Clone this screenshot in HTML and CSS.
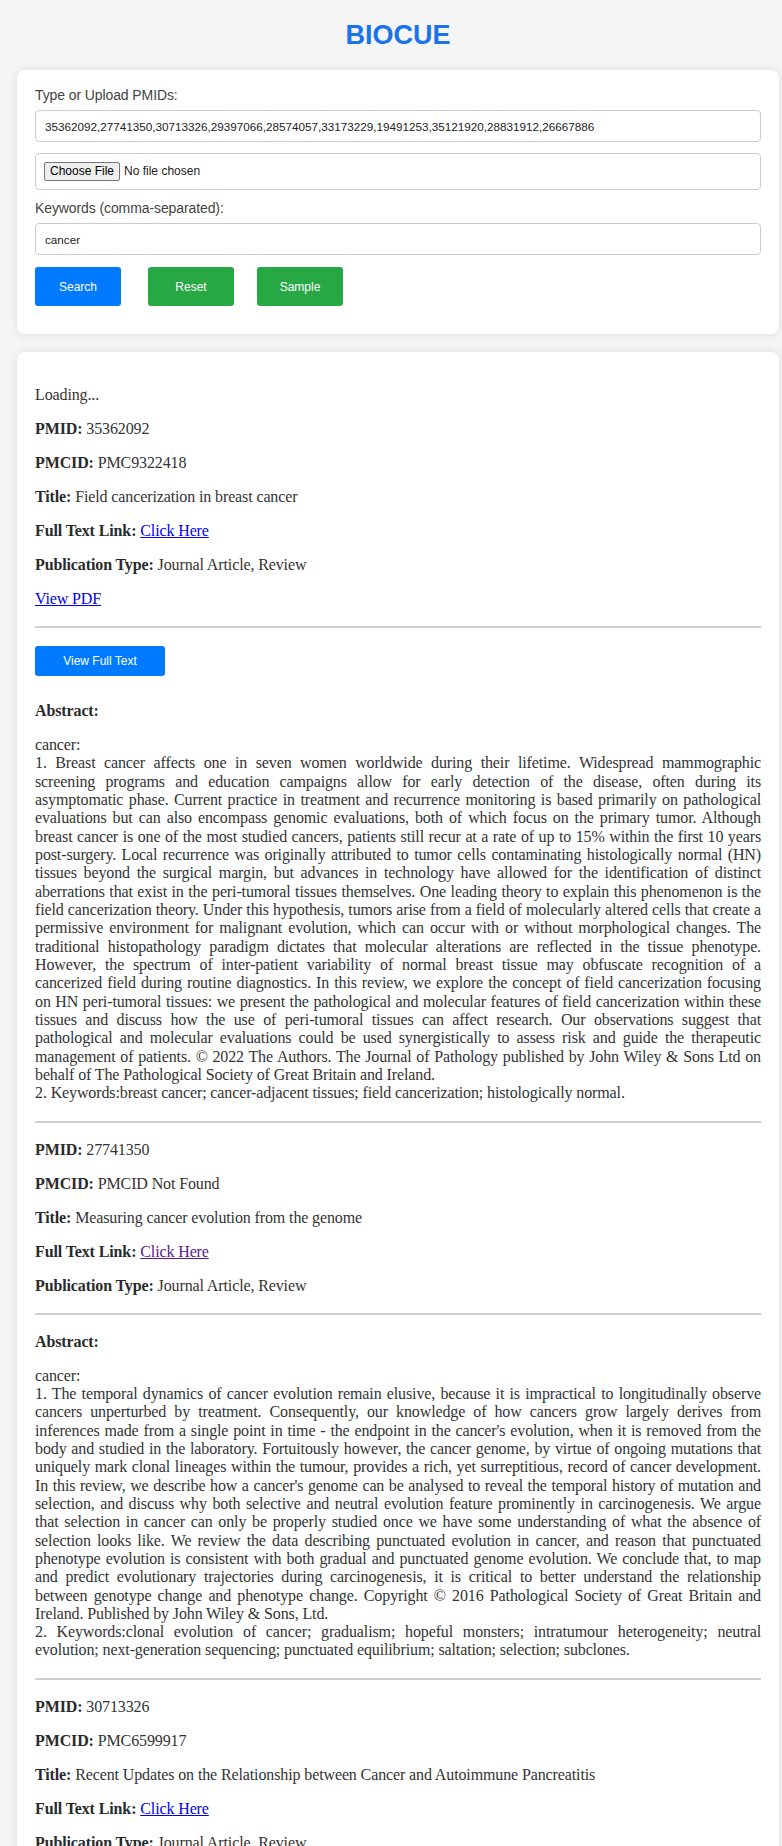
FILE: index.html
```html
<!DOCTYPE html>
<html lang="en">
<head>
<meta charset="utf-8">
<title>BIOCUE</title>
<link rel="stylesheet" href="styles.css">
</head>
<body>
<div class="page">
  <h1 class="brand">BIOCUE</h1>

  <section class="card form-card">
    <label class="field-label" for="pmids">Type or Upload PMIDs:</label>
    <input class="text-input" id="pmids" type="text" value="35362092,27741350,30713326,29397066,28574057,33173229,19491253,35121920,28831912,26667886">
    <input class="file-input" type="file">
    <label class="field-label field-label--spaced" for="keywords">Keywords (comma-separated):</label>
    <input class="text-input" id="keywords" type="text" value="cancer">
    <div class="actions">
      <button class="btn btn-blue" type="button">Search</button>
      <button class="btn btn-green btn-reset" type="button">Reset</button>
      <button class="btn btn-green btn-sample" type="button">Sample</button>
    </div>
  </section>

  <section class="card results-card">
    <p class="line">Loading...</p>

    <article class="result">
      <p class="line"><strong>PMID:</strong> 35362092</p>
      <p class="line"><strong>PMCID:</strong> PMC9322418</p>
      <p class="line"><strong>Title:</strong> Field cancerization in breast cancer</p>
      <p class="line"><strong>Full Text Link:</strong> <a class="link" href="#">Click Here</a></p>
      <p class="line"><strong>Publication Type:</strong> Journal Article, Review</p>
      <p class="line"><a class="link" href="#">View PDF</a></p>
      <hr class="rule">
      <div class="fulltext"><button class="btn btn-blue btn-fulltext" type="button">View Full Text</button></div>
      <p class="line"><strong>Abstract:</strong></p>
      <p class="abstract">cancer:<br>1. Breast cancer affects one in seven women worldwide during their lifetime. Widespread mammographic screening programs and education campaigns allow for early detection of the disease, often during its asymptomatic phase. Current practice in treatment and recurrence monitoring is based primarily on pathological evaluations but can also encompass genomic evaluations, both of which focus on the primary tumor. Although breast cancer is one of the most studied cancers, patients still recur at a rate of up to 15% within the first 10 years post-surgery. Local recurrence was originally attributed to tumor cells contaminating histologically normal (HN) tissues beyond the surgical margin, but advances in technology have allowed for the identification of distinct aberrations that exist in the peri-tumoral tissues themselves. One leading theory to explain this phenomenon is the field cancerization theory. Under this hypothesis, tumors arise from a field of molecularly altered cells that create a permissive environment for malignant evolution, which can occur with or without morphological changes. The traditional histopathology paradigm dictates that molecular alterations are reflected in the tissue phenotype. However, the spectrum of inter-patient variability of normal breast tissue may obfuscate recognition of a cancerized field during routine diagnostics. In this review, we explore the concept of field cancerization focusing on HN peri-tumoral tissues: we present the pathological and molecular features of field cancerization within these tissues and discuss how the use of peri-tumoral tissues can affect research. Our observations suggest that pathological and molecular evaluations could be used synergistically to assess risk and guide the therapeutic management of patients. © 2022 The Authors. The Journal of Pathology published by John Wiley &amp; Sons Ltd on behalf of The Pathological Society of Great Britain and Ireland.<br>2. Keywords:breast cancer; cancer-adjacent tissues; field cancerization; histologically normal.</p>
      <hr class="rule">
    </article>

    <article class="result">
      <p class="line"><strong>PMID:</strong> 27741350</p>
      <p class="line"><strong>PMCID:</strong> PMCID Not Found</p>
      <p class="line"><strong>Title:</strong> Measuring cancer evolution from the genome</p>
      <p class="line"><strong>Full Text Link:</strong> <a class="link link--visited" href="#">Click Here</a></p>
      <p class="line"><strong>Publication Type:</strong> Journal Article, Review</p>
      <hr class="rule">
      <p class="line"><strong>Abstract:</strong></p>
      <p class="abstract">cancer:<br>1. The temporal dynamics of cancer evolution remain elusive, because it is impractical to longitudinally observe cancers unperturbed by treatment. Consequently, our knowledge of how cancers grow largely derives from inferences made from a single point in time - the endpoint in the cancer's evolution, when it is removed from the body and studied in the laboratory. Fortuitously however, the cancer genome, by virtue of ongoing mutations that uniquely mark clonal lineages within the tumour, provides a rich, yet surreptitious, record of cancer development. In this review, we describe how a cancer's genome can be analysed to reveal the temporal history of mutation and selection, and discuss why both selective and neutral evolution feature prominently in carcinogenesis. We argue that selection in cancer can only be properly studied once we have some understanding of what the absence of selection looks like. We review the data describing punctuated evolution in cancer, and reason that punctuated phenotype evolution is consistent with both gradual and punctuated genome evolution. We conclude that, to map and predict evolutionary trajectories during carcinogenesis, it is critical to better understand the relationship between genotype change and phenotype change. Copyright © 2016 Pathological Society of Great Britain and Ireland. Published by John Wiley &amp; Sons, Ltd.<br>2. Keywords:clonal evolution of cancer; gradualism; hopeful monsters; intratumour heterogeneity; neutral evolution; next-generation sequencing; punctuated equilibrium; saltation; selection; subclones.</p>
      <hr class="rule">
    </article>

    <article class="result">
      <p class="line"><strong>PMID:</strong> 30713326</p>
      <p class="line"><strong>PMCID:</strong> PMC6599917</p>
      <p class="line"><strong>Title:</strong> Recent Updates on the Relationship between Cancer and Autoimmune Pancreatitis</p>
      <p class="line"><strong>Full Text Link:</strong> <a class="link" href="#">Click Here</a></p>
      <p class="line"><strong>Publication Type:</strong> Journal Article, Review</p>
      <p class="line"><a class="link" href="#">View PDF</a></p>
      <hr class="rule">
    </article>
  </section>
</div>
</body>
</html>
```

FILE: styles.css
```css
html, body {
  margin: 0;
  padding: 0;
  background: #f5f5f5;
}

.page {
  padding: 20px 3px 0 17px;
  font-family: "Liberation Sans", Arial, sans-serif;
}

.brand {
  margin: 0 0 20px;
  font-family: "Liberation Sans", Arial, sans-serif;
  font-size: 27px;
  line-height: 30px;
  font-weight: bold;
  color: #1a73e8;
  text-align: center;
}

.card {
  background: #fff;
  border-radius: 8px;
  box-shadow: 0 0 10px rgba(0, 0, 0, 0.1);
  padding: 18px;
}

.form-card {
  padding-top: 17px;
  margin-bottom: 18px;
}

.field-label {
  display: block;
  font-size: 14px;
  line-height: 16px;
  letter-spacing: -0.1px;
  color: #444;
  margin-bottom: 7px;
}

.field-label--spaced {
  margin-top: 10px;
}

.text-input {
  display: block;
  box-sizing: border-box;
  width: 100%;
  height: 32px;
  margin: 0;
  padding: 0 9px;
  border: 1px solid #ccc;
  border-radius: 4px;
  background: #fff;
  font-family: "Liberation Sans", Arial, sans-serif;
  font-size: 11.7px;
  color: #222;
}

.file-input {
  display: block;
  box-sizing: border-box;
  width: 100%;
  height: 37px;
  margin: 11px 0 0;
  padding: 8px;
  border: 1px solid #ccc;
  border-radius: 4px;
  background: #fff;
  font-family: "Liberation Sans", Arial, sans-serif;
  font-size: 12px;
  line-height: 19px;
  color: #222;
}

.file-input::file-selector-button {
  font-family: "Liberation Sans", Arial, sans-serif;
  font-size: 12px;
  line-height: 15px;
  padding: 1px 5px;
  margin-right: 4px;
  border: 1px solid #767676;
  border-radius: 2px;
  background: #efefef;
  color: #000;
}

.actions {
  display: flex;
  margin: 12px 0 10px;
}

.btn {
  box-sizing: border-box;
  border: 0;
  border-radius: 3px;
  color: #fff;
  font-family: "Liberation Sans", Arial, sans-serif;
  font-size: 12px;
  line-height: 14px;
  padding: 0;
  cursor: pointer;
}

.actions .btn {
  width: 86px;
  height: 39px;
}

.btn-blue {
  background: #007bff;
}

.btn-green {
  background: #28a745;
}

.btn-reset {
  margin-left: 27px;
}

.btn-sample {
  margin-left: 23px;
}

.results-card {
  font-family: "Liberation Serif", "Times New Roman", serif;
  font-size: 16px;
  letter-spacing: -0.12px;
  color: #333;
}

.line {
  margin: 16px 0;
  line-height: 18px;
}

.line strong {
  color: #2a2a2a;
}

.abstract {
  margin: 16px 0;
  line-height: 18.33px;
  text-align: justify;
}

.link {
  color: #0000ee;
}

.link--visited {
  color: #551a8b;
}

.rule {
  border: 0;
  border-top: 2px solid #cfcfcf;
  height: 0;
  margin: 18px 0;
}

.fulltext {
  margin: 18px 0 26px;
}

.btn-fulltext {
  display: block;
  width: 130px;
  height: 30px;
  letter-spacing: 0;
}
```
